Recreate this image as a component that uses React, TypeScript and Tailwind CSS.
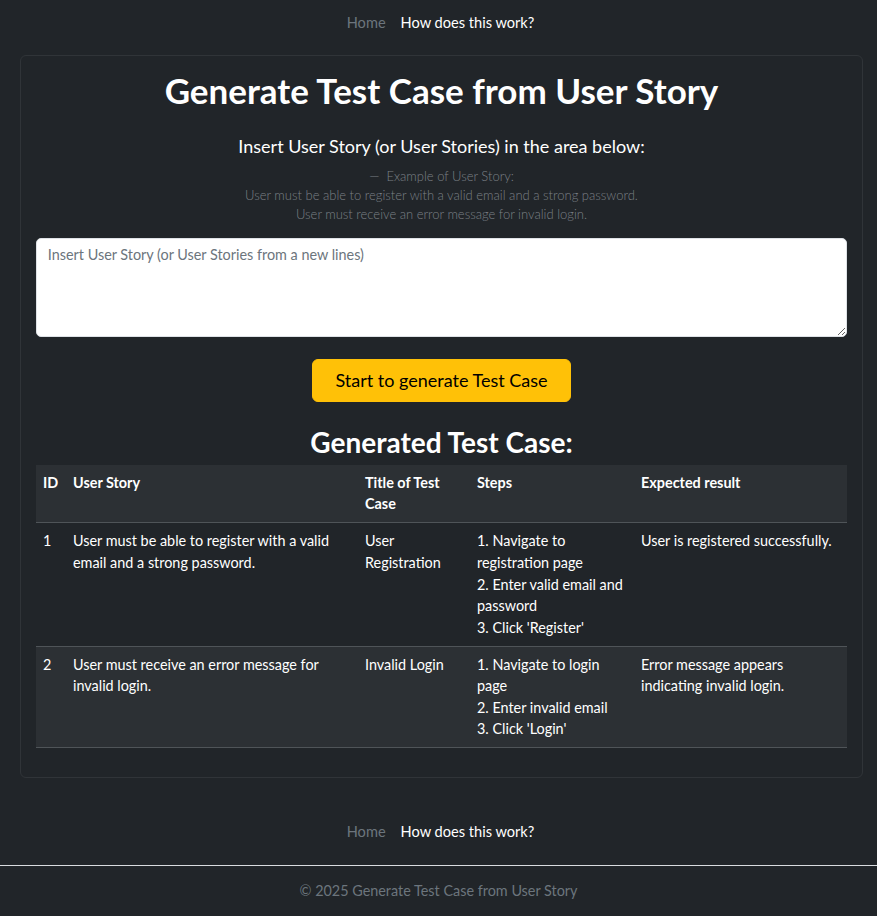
import React from "react";

const rows = [
  {
    id: "1",
    story: "User must be able to register with a valid email and a strong password.",
    title: "User Registration",
    steps: ["1. Navigate to registration page", "2. Enter valid email and password", "3. Click 'Register'"],
    expected: "User is registered successfully.",
  },
  {
    id: "2",
    story: "User must receive an error message for invalid login.",
    title: "Invalid Login",
    steps: ["1. Navigate to login page", "2. Enter invalid email", "3. Click 'Login'"],
    expected: "Error message appears indicating invalid login.",
  },
];

function NavLinks() {
  return (
    <nav className="flex h-[46px] items-center justify-center pl-[4px] text-[14.6px]">
      <a className="px-[7.5px] text-[#6c757d]">Home</a>
      <a className="px-[7.5px] text-white">How does this work?</a>
    </nav>
  );
}

export default function App() {
  return (
    <div
      className="min-h-screen bg-[#212529] text-[#dee2e6] text-[14.4px] leading-[1.5]"
      style={{ fontFamily: 'Lato, "Noto Sans", sans-serif' }}
    >
      <NavLinks />

      <main className="ml-[20px] mr-[14px] mt-[9px] rounded-[6px] border border-[#303438] p-[15px]">
        <h1 className="text-center text-[35px] font-bold leading-[39px] text-white">
          Generate Test Case from User Story
        </h1>
        <h5 className="mt-[26px] text-center text-[18px] font-normal leading-[1.2] text-white">
          Insert User Story (or User Stories) in the area below:
        </h5>
        <div className="mt-[9px] text-center text-[13px] font-light leading-[19px] text-[#7b8086]">
          <div>— &nbsp;Example of User Story:</div>
          <div>User must be able to register with a valid email and a strong password.</div>
          <div>User must receive an error message for invalid login.</div>
        </div>

        <textarea
          rows={4}
          placeholder="Insert User Story (or User Stories from a new lines)"
          className="mt-[14px] block h-[99px] w-full resize-y rounded-[5px] border border-[#dee2e6] bg-white px-[10.8px] py-[5.4px] text-[14.4px] leading-[1.5] text-[#212529] placeholder:text-[#6c757d] outline-none"
        />

        <div className="mt-[22px] flex justify-center">
          <button className="h-[43px] rounded-[6px] border border-[#ffc107] bg-[#ffc107] px-[22px] text-[18px] leading-[1.5] text-black">
            Start to generate Test Case
          </button>
        </div>

        <h2 className="mt-[24px] text-center text-[28px] font-bold leading-[32px] text-white">
          Generated Test Case:
        </h2>

        <table className="mb-[14px] mt-[7px] w-full table-fixed border-collapse text-left text-[14.4px] leading-[21.6px] text-white">
          <colgroup>
            <col className="w-[29px]" />
            <col className="w-[292px]" />
            <col className="w-[112px]" />
            <col className="w-[164px]" />
            <col />
          </colgroup>
          <thead>
            <tr className="border-b border-[#4f5458] bg-[#2c3034] align-top">
              <th className="px-[7px] py-[7.2px] font-bold">ID</th>
              <th className="pl-[8px] pr-[7px] py-[7.2px] font-bold">User Story</th>
              <th className="pl-[8px] pr-[7px] py-[7.2px] font-bold">Title of Test Case</th>
              <th className="pl-[8px] pr-[7px] py-[7.2px] font-bold">Steps</th>
              <th className="pl-[8px] pr-[7px] py-[7.2px] font-bold">Expected result</th>
            </tr>
          </thead>
          <tbody>
            {rows.map((r, i) => (
              <tr
                key={r.id}
                className={`border-b border-[#4f5458] align-top ${i % 2 === 1 ? "bg-[#2c3034]" : "bg-[#212529]"}`}
              >
                <td className="px-[7px] py-[7.2px]">{r.id}</td>
                <td className="pl-[8px] pr-[7px] py-[7.2px]">{r.story}</td>
                <td className="pl-[8px] pr-[7px] py-[7.2px]">{r.title}</td>
                <td className="pl-[8px] pr-[7px] py-[7.2px]">
                  {r.steps.map((s) => (
                    <div key={s}>{s}</div>
                  ))}
                </td>
                <td className="pl-[8px] pr-[7px] py-[7.2px]">{r.expected}</td>
              </tr>
            ))}
          </tbody>
        </table>
      </main>

      <footer className="mt-[31px]">
        <NavLinks />
        <div className="mt-[10px] border-t border-[#d9dcdf]" />
        <p className="py-[14px] text-center text-[14.4px] leading-[21.6px] text-[#6c757d]">
          © 2025 Generate Test Case from User Story
        </p>
      </footer>
    </div>
  );
}
